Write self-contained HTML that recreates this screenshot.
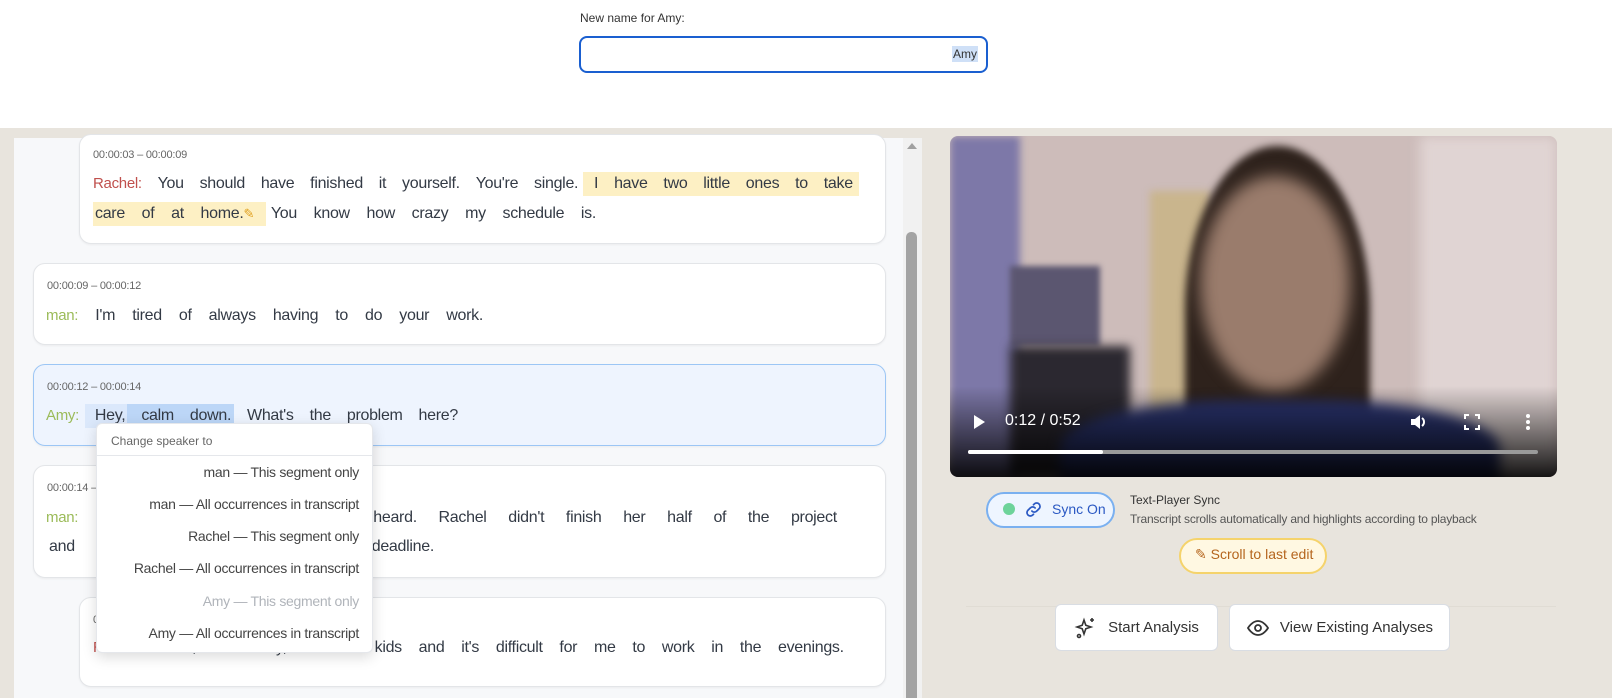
<!DOCTYPE html>
<html><head><meta charset="utf-8"><style>
*{box-sizing:border-box;margin:0;padding:0}
body{width:1612px;height:698px;overflow:hidden;background:#e8e4dd;font-family:"Liberation Sans",sans-serif;position:relative;color:#333a45}
.abs{position:absolute}
.top{left:0;top:0;width:1612px;height:128px;background:#fff}
.panel{left:14px;top:138px;width:908px;height:560px;background:#f7f8fa}
.card{position:absolute;background:#fff;border:1px solid #e3e5e8;border-radius:12px;box-shadow:0 1px 2px rgba(0,0,0,.05)}
.time{position:absolute;font-size:11px;color:#666;letter-spacing:-.2px}
.line{position:absolute;display:flex;justify-content:space-between;font-size:16px;line-height:22px;height:22px;white-space:nowrap;letter-spacing:-.3px}
.sp{font-size:15px}
.r{color:#c0504d}.g{color:#9bbb59}
.hl{position:absolute;background:#fdf0c4}
.menu{position:absolute;left:96px;top:423px;width:277px;height:230px;background:#fff;border:1px solid #e5e7eb;border-radius:6px;box-shadow:0 4px 14px rgba(0,0,0,.15)}
.mi{position:absolute;right:13px;font-size:14px;color:#444;white-space:nowrap;letter-spacing:-.3px}
.btn{position:absolute;background:#fff;border:1.5px solid #d9dde3;border-radius:6px;display:flex;align-items:center;justify-content:center;font-size:15px;color:#333;gap:10px}
</style></head><body>
<div class="abs top"></div>
<div class="abs" style="left:580px;top:11px;font-size:12px;color:#333">New name for Amy:</div>
<div class="abs" style="left:579px;top:36px;width:409px;height:37px;border:2px solid #1a5fd0;border-radius:8px;background:#fff"></div>
<div class="abs" style="left:952px;top:46px;font-size:12px;color:#333;background:#cfe0f7;padding:0 1px;line-height:16px">Amy</div>

<div class="abs panel"></div>
<div class="abs" style="left:903px;top:138px;width:19px;height:560px;background:#f1f1f1"></div>
<div class="abs" style="left:907px;top:143px;width:0;height:0;border-left:5px solid transparent;border-right:5px solid transparent;border-bottom:6px solid #a0a0a0"></div>
<div class="abs" style="left:906px;top:232px;width:11px;height:466px;background:#a3a3a3;border-radius:5px 5px 0 0"></div>

<div class="card" style="left:79px;top:134px;width:807px;height:110px"></div>
<div class="time" style="left:93px;top:149px">00:00:03 – 00:00:09</div>
<div class="hl" style="left:583px;top:172px;width:276px;height:24px"></div>
<div class="hl" style="left:93px;top:202px;width:173px;height:24px"></div>
<div class="line" style="left:93px;top:173px;width:760px"><span class="sp r">Rachel:</span><span>You</span><span>should</span><span>have</span><span>finished</span><span>it</span><span>yourself.</span><span>You're</span><span>single.</span><span>I</span><span>have</span><span>two</span><span>little</span><span>ones</span><span>to</span><span>take</span></div>
<div class="line" style="left:95px;top:203px;width:501px"><span>care</span><span>of</span><span>at</span><span>home.<span style="color:#e0a020;font-size:13px">✎</span></span><span>You</span><span>know</span><span>how</span><span>crazy</span><span>my</span><span>schedule</span><span>is.</span></div>

<div class="card" style="left:33px;top:263px;width:853px;height:82px"></div>
<div class="time" style="left:47px;top:280px">00:00:09 – 00:00:12</div>
<div class="line" style="left:46px;top:305px;width:437px"><span class="sp g">man:</span><span>I'm</span><span>tired</span><span>of</span><span>always</span><span>having</span><span>to</span><span>do</span><span>your</span><span>work.</span></div>

<div class="card" style="left:33px;top:364px;width:853px;height:82px;background:#eef4fe;border-color:#9cc6f5"></div>
<div class="time" style="left:47px;top:381px">00:00:12 – 00:00:14</div>
<div class="hl" style="left:85px;top:404px;width:43px;height:24px;background:#dbe8fb"></div>
<div class="hl" style="left:127px;top:404px;width:107px;height:24px;background:#bcd6f7"></div>
<div class="line" style="left:46px;top:405px;width:412px"><span class="sp g">Amy:</span><span>Hey,</span><span>calm</span><span>down.</span><span>What's</span><span>the</span><span>problem</span><span>here?</span></div>

<div class="card" style="left:33px;top:465px;width:853px;height:113px"></div>
<div class="time" style="left:47px;top:482px">00:00:14 – 00:00:19</div>
<div class="line" style="left:46px;top:507px;width:791px"><span class="sp g">man:</span><span>What?</span><span>That's</span><span>not</span><span>what</span><span>you</span><span>heard.</span><span>Rachel</span><span>didn't</span><span>finish</span><span>her</span><span>half</span><span>of</span><span>the</span><span>project</span></div>
<div class="line" style="left:49px;top:536px;width:385px"><span>and</span><span>made</span><span>us</span><span>miss</span><span>the</span><span>deadline.</span></div>

<div class="card" style="left:79px;top:597px;width:807px;height:90px"></div>
<div class="time" style="left:93px;top:614px">00:00:19 – 00:00:24</div>
<div class="line" style="left:93px;top:637px;width:751px"><span class="sp r">Rachel:</span><span>Look,</span><span>I'm</span><span>sorry,</span><span>I</span><span>have</span><span>kids</span><span>and</span><span>it's</span><span>difficult</span><span>for</span><span>me</span><span>to</span><span>work</span><span>in</span><span>the</span><span>evenings.</span></div>

<div class="menu">
<div class="abs" style="left:14px;top:10px;font-size:12px;color:#666">Change speaker to</div>
<div class="abs" style="left:0;top:31px;width:275px;height:1px;background:#e5e7eb"></div>
<div class="mi" style="top:40px">man — This segment only</div>
<div class="mi" style="top:72px">man — All occurrences in transcript</div>
<div class="mi" style="top:104px">Rachel — This segment only</div>
<div class="mi" style="top:136px">Rachel — All occurrences in transcript</div>
<div class="mi" style="top:169px;color:#b0b4ba">Amy — This segment only</div>
<div class="mi" style="top:201px">Amy — All occurrences in transcript</div>
</div>

<div class="abs" style="left:950px;top:136px;width:607px;height:341px;border-radius:8px;overflow:hidden;background:#cdbcba">
 <div class="abs" style="left:0;top:0;width:70px;height:341px;background:#7d78a8;filter:blur(4px)"></div>
 <div class="abs" style="left:470px;top:0;width:137px;height:341px;background:#e0d4d3;filter:blur(6px)"></div>
 <div class="abs" style="left:200px;top:55px;width:60px;height:230px;background:#c9b58d;filter:blur(4px)"></div>
 <div class="abs" style="left:60px;top:130px;width:90px;height:80px;background:#5b5670;filter:blur(3px)"></div>
 <div class="abs" style="left:60px;top:210px;width:120px;height:130px;background:#2b2830;filter:blur(5px)"></div>
 <div class="abs" style="left:235px;top:10px;width:185px;height:330px;background:#2e221c;border-radius:50% 50% 10% 10%;filter:blur(4px)"></div>
 <div class="abs" style="left:250px;top:40px;width:150px;height:215px;background:#9a7c6c;border-radius:50%;filter:blur(8px)"></div>
 <div class="abs" style="left:110px;top:265px;width:440px;height:120px;background:#2a3470;border-radius:40% 40% 0 0;filter:blur(6px)"></div>
 <div class="abs" style="left:0;top:250px;width:607px;height:91px;background:linear-gradient(rgba(0,0,0,0),rgba(0,0,0,.9))"></div>
 <div class="abs" style="left:24px;top:279px;width:0;height:0;border-top:7px solid transparent;border-bottom:7px solid transparent;border-left:11px solid #fff"></div>
 <div class="abs" style="left:55px;top:276px;color:#fff;font-size:16px">0:12 / 0:52</div>
 <svg class="abs" style="left:459px;top:276px" width="20" height="20" viewBox="0 0 20 20"><path d="M2 7h4l5-4v14l-5-4H2z" fill="#fff"/><path d="M13 6a5 5 0 0 1 0 8" stroke="#fff" stroke-width="2" fill="none"/></svg>
 <svg class="abs" style="left:514px;top:278px" width="16" height="16" viewBox="0 0 16 16" fill="none" stroke="#fff" stroke-width="2"><path d="M1 5V1h4M11 1h4v4M15 11v4h-4M5 15H1v-4"/></svg>
 <div class="abs" style="left:576px;top:278px;width:4px;height:4px;background:#fff;border-radius:2px;box-shadow:0 6px 0 #fff,0 12px 0 #fff"></div>
 <div class="abs" style="left:18px;top:314px;width:570px;height:4px;background:#9a9a9a;border-radius:2px"></div>
 <div class="abs" style="left:18px;top:314px;width:135px;height:4px;background:#fff;border-radius:2px"></div>
</div>

<div class="abs" style="left:986px;top:492px;width:129px;height:36px;border:2px solid #7ab0f0;border-radius:18px;background:#eef5ff"></div>
<div class="abs" style="left:1003px;top:503px;width:12px;height:12px;border-radius:6px;background:#6dd39a"></div>
<svg class="abs" style="left:1024px;top:500px" width="19" height="19" viewBox="0 0 24 24" fill="none" stroke="#2b59c3" stroke-width="2.2" stroke-linecap="round"><path d="M10 14a4 4 0 0 0 6 0l3-3a4 4 0 0 0-6-6l-1 1"/><path d="M14 10a4 4 0 0 0-6 0l-3 3a4 4 0 0 0 6 6l1-1"/></svg>
<div class="abs" style="left:1052px;top:501px;font-size:14px;color:#2b59c3">Sync On</div>
<div class="abs" style="left:1130px;top:493px;font-size:12px;color:#333">Text-Player Sync</div>
<div class="abs" style="left:1130px;top:512px;font-size:12px;color:#555;letter-spacing:-.2px">Transcript scrolls automatically and highlights according to playback</div>
<div class="abs" style="left:1179px;top:538px;width:148px;height:36px;border:2px solid #f5d36b;border-radius:18px;background:#fff8e2"></div>
<div class="abs" style="left:1195px;top:546px;font-size:14px;color:#b5651d">✎ Scroll to last edit</div>
<div class="abs" style="left:966px;top:606px;width:590px;height:1px;background:#e0dcd4"></div>

<div class="btn" style="left:1055px;top:604px;width:163px;height:47px">
<svg width="24" height="24" viewBox="0 0 24 24" fill="none" stroke="#333" stroke-width="1.6"><path d="M10 4l1.8 5.2L17 11l-5.2 1.8L10 18l-1.8-5.2L3 11l5.2-1.8z"/><path d="M18 2v4M16 4h4"/><circle cx="5" cy="20" r="1.5"/></svg>Start Analysis</div>
<div class="btn" style="left:1229px;top:604px;width:221px;height:47px">
<svg width="24" height="24" viewBox="0 0 24 24" fill="none" stroke="#333" stroke-width="1.8"><path d="M2 12s4-7 10-7 10 7 10 7-4 7-10 7S2 12 2 12z"/><circle cx="12" cy="12" r="3"/></svg>View Existing Analyses</div>
</body></html>
